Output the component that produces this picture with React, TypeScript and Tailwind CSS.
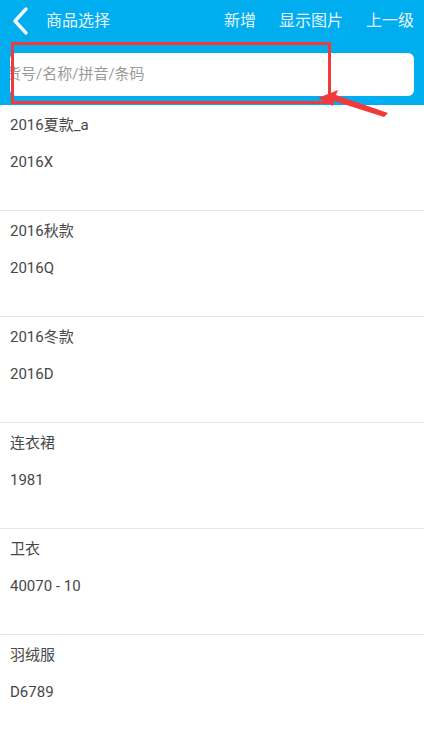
import React from 'react';

const items = [
  { name: '2016夏款_a', code: '2016X' },
  { name: '2016秋款', code: '2016Q' },
  { name: '2016冬款', code: '2016D' },
  { name: '连衣裙', code: '1981' },
  { name: '卫衣', code: '40070 - 10' },
  { name: '羽绒服', code: 'D6789' },
];

export default function App() {
  return (
    <div className="relative w-[424px] h-[730px] overflow-hidden bg-white font-['Roboto','Noto_Sans_CJK_SC',sans-serif]">
      <div className="bg-[#00adef] h-[105px] flex flex-col">
        <div className="h-[42px] flex items-center pl-[12px] pr-[10px] text-[#e6f6fd]">
          <svg width="18" height="28" viewBox="0 0 18 28" className="mr-[16px]">
            <path d="M14 2 L3 14 L14 26" stroke="#eef9fe" strokeWidth="3.4" fill="none" strokeLinecap="round" strokeLinejoin="round" />
          </svg>
          <span className="text-[16px]">商品选择</span>
          <div className="ml-auto flex gap-[23px] text-[16px]">
            <span>新增</span>
            <span>显示图片</span>
            <span>上一级</span>
          </div>
        </div>
        <div className="mt-[11px] ml-[10px] mr-[10px] h-[43px] bg-white rounded-[6px] flex items-center overflow-hidden">
          <span className="text-[15px] text-[#9a9a9a] -ml-[4px] whitespace-nowrap">货号/名称/拼音/条码</span>
        </div>
      </div>
      <div>
        {items.map((it) => (
          <div key={it.name} className="h-[106px] border-b border-[#e6e6e6] pl-[10px] pt-[9px] text-[15px] text-[#474747]">
            <div className="h-[22px] leading-[22px]">{it.name}</div>
            <div className="mt-[15px] h-[22px] leading-[22px]">{it.code}</div>
          </div>
        ))}
      </div>
      {/* annotation overlay */}
      <div className="absolute left-[11px] top-[42px] w-[320px] h-[62px] border-[3px] border-[#f23a3a]" />
      <svg className="absolute left-0 top-0" width="424" height="730">
        <polygon points="318,98 338,90 336,95 388,113 384,117 334,101 333,106" fill="#f23a3a" />
      </svg>
    </div>
  );
}
